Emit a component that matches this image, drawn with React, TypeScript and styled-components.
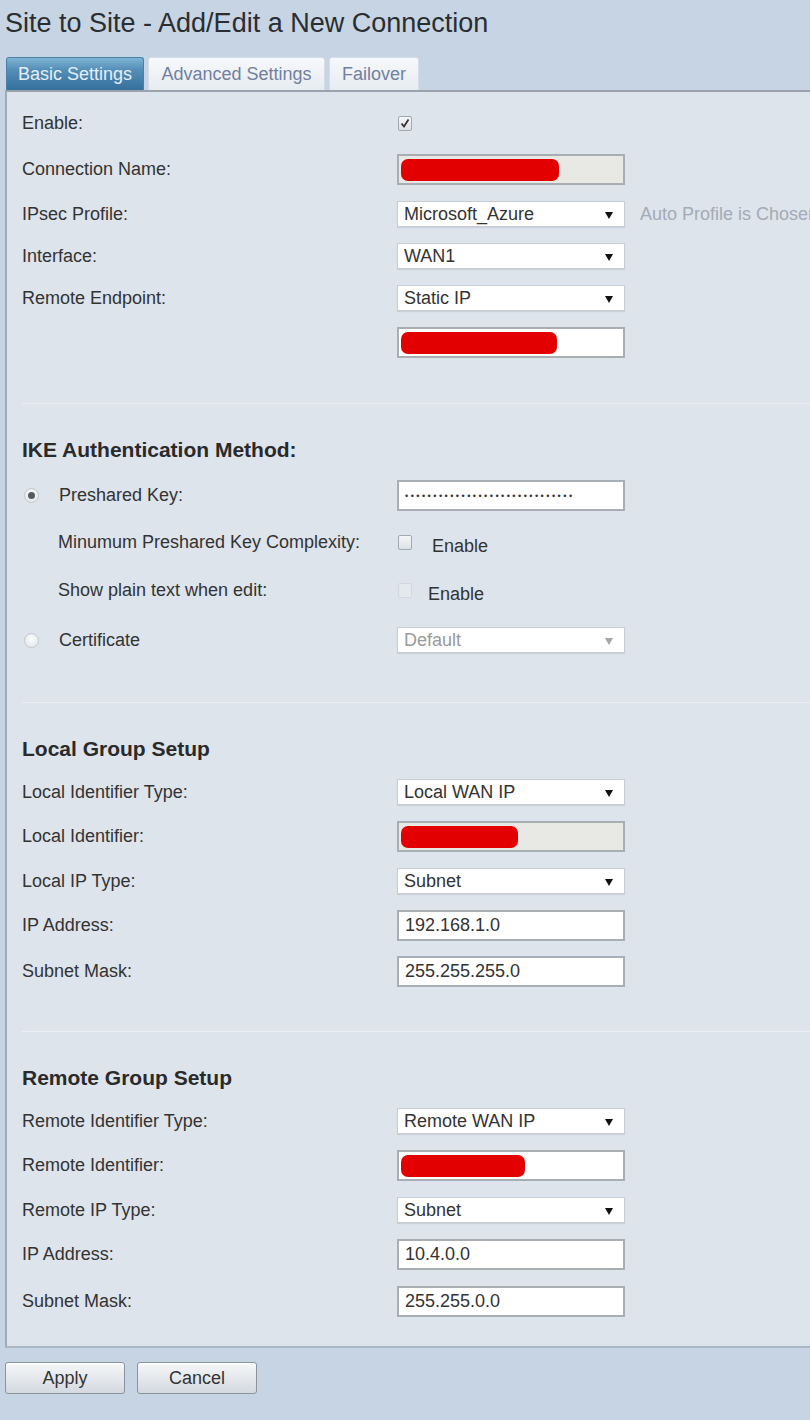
import styled, { createGlobalStyle } from "styled-components"

const GlobalStyle = createGlobalStyle`
  body {
    margin: 0;
    background: #c6d4e3;
    font-family: "Liberation Sans", Arial, sans-serif;
    color: #333;
  }
`

const Page = styled.div`
  width: 810px;
  overflow: hidden;
  padding-left: 5px;
  box-sizing: border-box;
`

const Title = styled.h1`
  margin: 0;
  height: 57px;
  padding-top: 6px;
  box-sizing: border-box;
  font-size: 27px;
  line-height: 34px;
  font-weight: normal;
  color: #2b2d30;
  white-space: nowrap;
`

const TabBar = styled.div`
  display: flex;
  gap: 4px;
  padding-left: 1px;
`

const Tab = styled.div<{ $active?: boolean; $w: number }>`
  width: ${p => p.$w}px;
  height: 33px;
  display: flex;
  align-items: center;
  justify-content: center;
  font-size: 18px;
  border-radius: 3px 3px 0 0;
  color: ${p => (p.$active ? "#e6eef6" : "#7180a0")};
  background: ${p =>
    p.$active
      ? "linear-gradient(#7fb4d4 0%, #5690b9 35%, #34709b 100%)"
      : "linear-gradient(#f7f9fb, #e7ecf1)"};
  border: 1px solid ${p => (p.$active ? "#4a80a8" : "#d5dde6")};
  border-bottom: none;
  box-sizing: border-box;
`

const Panel = styled.div`
  margin-right: -20px;
  background: #dde4ec;
  border-top: 2px solid #9aa3ad;
  border-left: 2px solid #9eabbb;
  border-bottom: 2px solid #aab6c5;
  padding: 8px 0 21px 15px;
`

const Row = styled.div<{ $h: number }>`
  display: flex;
  align-items: center;
  height: ${p => p.$h}px;
  white-space: nowrap;
`

const Label = styled.div<{ $indent?: number }>`
  width: 375px;
  box-sizing: border-box;
  padding-left: ${p => p.$indent ?? 0}px;
  font-size: 18px;
  display: flex;
  align-items: center;
  flex-shrink: 0;
`

const Heading = styled.div`
  height: 44px;
  display: flex;
  align-items: center;
  font-size: 21px;
  font-weight: bold;
  color: #2a2a2a;
`

const Separator = styled.div`
  height: 1px;
  background: #e9eef3;
  margin: 37px 0 24px 0;
`

const TextField = styled.div<{ $disabled?: boolean }>`
  width: 228px;
  height: 31px;
  box-sizing: border-box;
  border: 2px solid #a9aeb3;
  background: ${p => (p.$disabled ? "#e8e9e5" : "#fff")};
  padding: 0 6px;
  display: flex;
  align-items: center;
  font-size: 18px;
  color: #333;
  flex-shrink: 0;
`

const Redacted = styled.div<{ $w: number }>`
  width: ${p => p.$w}px;
  height: 22px;
  border-radius: 7px;
  background: #e30000;
  margin-left: -4px;
`

const Dots = styled.span`
  font-size: 9px;
  letter-spacing: 2.5px;
  color: #333;
`

const SelectBox = styled.div<{ $disabled?: boolean }>`
  width: 228px;
  height: 26px;
  box-sizing: border-box;
  border: 1px solid #c9cdd2;
  box-shadow: 0 1px 1px rgba(0, 0, 0, 0.08);
  background: #fff;
  padding: 0 11px 0 6px;
  display: flex;
  align-items: center;
  justify-content: space-between;
  font-size: 18px;
  color: ${p => (p.$disabled ? "#9a9a9a" : "#333")};
  flex-shrink: 0;
`

const Hint = styled.span`
  margin-left: 15px;
  font-size: 18px;
  color: #a3abb5;
`

const Box = styled.span<{ $disabled?: boolean }>`
  width: 14px;
  height: 15px;
  box-sizing: border-box;
  border: 1px solid ${p => (p.$disabled ? "#d3d8de" : "#a2a9b1")};
  border-radius: 2px;
  background: ${p => (p.$disabled ? "#e4e9ee" : "linear-gradient(#f5f6f8, #dde1e6)")};
  display: inline-flex;
  align-items: center;
  justify-content: center;
  margin-left: 1px;
`

const CheckText = styled.span<{ $gap: number }>`
  margin-left: ${p => p.$gap}px;
  font-size: 18px;
  position: relative;
  top: 4px;
`

const Radio = styled.span<{ $on?: boolean }>`
  width: 15px;
  height: 15px;
  box-sizing: border-box;
  border-radius: 50%;
  border: 1px solid #c2c8cf;
  background: radial-gradient(circle at 50% 40%, #fbfcfd, #dfe3e8);
  display: inline-flex;
  align-items: center;
  justify-content: center;
  margin: 0 20px 0 2px;
  &::after {
    content: "";
    display: ${p => (p.$on ? "block" : "none")};
    width: 7px;
    height: 7px;
    border-radius: 50%;
    background: #555b62;
  }
`

const Buttons = styled.div`
  display: flex;
  gap: 12px;
  margin-top: 14px;
`

const Button = styled.button`
  width: 120px;
  height: 32px;
  font-family: inherit;
  font-size: 18px;
  color: #333;
  border: 1px solid #8b949d;
  border-radius: 3px;
  background: linear-gradient(#f6f7f9, #d3d9df);
  box-shadow: inset 0 1px 0 #fff;
`

function Arrow({ color = "#111" }: { color?: string }) {
  return (
    <svg width="8" height="9" viewBox="0 0 8 9">
      <path d="M0 2 H8 L4 9 Z" fill={color} />
    </svg>
  )
}

function Check() {
  return (
    <svg width="10" height="10" viewBox="0 0 10 10">
      <path d="M1.5 5.5 L4 8.5 L8.5 1.5" fill="none" stroke="#333" strokeWidth="1.8" />
    </svg>
  )
}

function Select({ value, disabled }: { value: string; disabled?: boolean }) {
  return (
    <SelectBox $disabled={disabled}>
      <span>{value}</span>
      <Arrow color={disabled ? "#a5a5a5" : "#111"} />
    </SelectBox>
  )
}

export default function App() {
  return (
    <Page>
      <GlobalStyle />
      <Title>Site to Site - Add/Edit a New Connection</Title>
      <TabBar>
        <Tab $active $w={138}>Basic Settings</Tab>
        <Tab $w={177}>Advanced Settings</Tab>
        <Tab $w={90}>Failover</Tab>
      </TabBar>
      <Panel>
        <Row $h={46}>
          <Label>Enable:</Label>
          <Box><Check /></Box>
        </Row>
        <Row $h={47}>
          <Label>Connection Name:</Label>
          <TextField $disabled><Redacted $w={158} /></TextField>
        </Row>
        <Row $h={42}>
          <Label>IPsec Profile:</Label>
          <Select value="Microsoft_Azure" />
          <Hint>Auto Profile is Chosen</Hint>
        </Row>
        <Row $h={42}>
          <Label>Interface:</Label>
          <Select value="WAN1" />
        </Row>
        <Row $h={42}>
          <Label>Remote Endpoint:</Label>
          <Select value="Static IP" />
        </Row>
        <Row $h={47}>
          <Label />
          <TextField><Redacted $w={156} /></TextField>
        </Row>

        <Separator />
        <Heading>IKE Authentication Method:</Heading>
        <Row $h={47}>
          <Label><Radio $on />Preshared Key:</Label>
          <TextField><Dots>{"•".repeat(30)}</Dots></TextField>
        </Row>
        <Row $h={46}>
          <Label $indent={36}>Minumum Preshared Key Complexity:</Label>
          <Box />
          <CheckText $gap={20}>Enable</CheckText>
        </Row>
        <Row $h={50}>
          <Label $indent={36}>Show plain text when edit:</Label>
          <Box $disabled />
          <CheckText $gap={16}>Enable</CheckText>
        </Row>
        <Row $h={50}>
          <Label><Radio />Certificate</Label>
          <Select value="Default" disabled />
        </Row>

        <Separator />
        <Heading>Local Group Setup</Heading>
        <Row $h={42}>
          <Label>Local Identifier Type:</Label>
          <Select value="Local WAN IP" />
        </Row>
        <Row $h={47}>
          <Label>Local Identifier:</Label>
          <TextField $disabled><Redacted $w={117} /></TextField>
        </Row>
        <Row $h={42}>
          <Label>Local IP Type:</Label>
          <Select value="Subnet" />
        </Row>
        <Row $h={46}>
          <Label>IP Address:</Label>
          <TextField>192.168.1.0</TextField>
        </Row>
        <Row $h={46}>
          <Label>Subnet Mask:</Label>
          <TextField>255.255.255.0</TextField>
        </Row>

        <Separator />
        <Heading>Remote Group Setup</Heading>
        <Row $h={42}>
          <Label>Remote Identifier Type:</Label>
          <Select value="Remote WAN IP" />
        </Row>
        <Row $h={47}>
          <Label>Remote Identifier:</Label>
          <TextField><Redacted $w={124} /></TextField>
        </Row>
        <Row $h={42}>
          <Label>Remote IP Type:</Label>
          <Select value="Subnet" />
        </Row>
        <Row $h={47}>
          <Label>IP Address:</Label>
          <TextField>10.4.0.0</TextField>
        </Row>
        <Row $h={47}>
          <Label>Subnet Mask:</Label>
          <TextField>255.255.0.0</TextField>
        </Row>
      </Panel>
      <Buttons>
        <Button>Apply</Button>
        <Button>Cancel</Button>
      </Buttons>
    </Page>
  )
}
